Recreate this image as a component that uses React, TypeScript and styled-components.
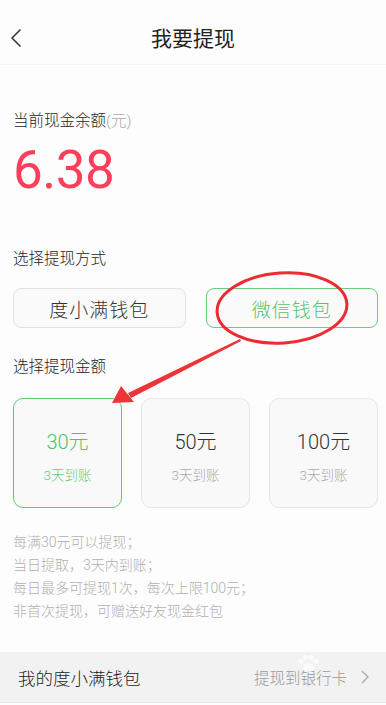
import React, { useState } from 'react';
import styled, { createGlobalStyle } from 'styled-components';

const GlobalStyle = createGlobalStyle`
  html, body {
    margin: 0;
    padding: 0;
    background: #fdfdfd;
  }
  body {
    font-family: Roboto, 'Noto Sans CJK SC', sans-serif;
    font-weight: 300;
    -webkit-font-smoothing: antialiased;
  }
`;

const methods = ['度小满钱包', '微信钱包'];

const amounts = [
  { value: '30元', note: '3天到账' },
  { value: '50元', note: '3天到账' },
  { value: '100元', note: '3天到账' },
];

const rules = [
  '每满30元可以提现；',
  '当日提取，3天内到账；',
  '每日最多可提现1次，每次上限100元；',
  '非首次提现，可赠送好友现金红包',
];

const App: React.FC = () => {
  const [method, setMethod] = useState(1);
  const [amount, setAmount] = useState(0);

  return (
    <Page>
      <GlobalStyle />
      <Header>
        <BackButton aria-label="back">
          <svg width="12" height="20" viewBox="0 0 12 20">
            <path d="M10.5 1.5 L2 10 L10.5 18.5" fill="none" stroke="#333" strokeWidth="1.5" />
          </svg>
        </BackButton>
        <Title>我要提现</Title>
      </Header>

      <Content>
        <Label>
          当前现金余额<Unit>(元)</Unit>
        </Label>
        <Balance>6.38</Balance>

        <SectionLabel $top={52}>选择提现方式</SectionLabel>
        <MethodRow>
          {methods.map((m, i) => (
            <MethodButton key={m} $active={method === i} onClick={() => setMethod(i)}>
              {m}
            </MethodButton>
          ))}
        </MethodRow>

        <SectionLabel $top={29}>选择提现金额</SectionLabel>
        <AmountGrid>
          {amounts.map((a, i) => (
            <AmountCard key={a.value} $active={amount === i} onClick={() => setAmount(i)}>
              <AmountValue>{a.value}</AmountValue>
              <AmountNote $active={amount === i}>{a.note}</AmountNote>
            </AmountCard>
          ))}
        </AmountGrid>

        <Rules>
          {rules.map((r) => (
            <Rule key={r}>{r}</Rule>
          ))}
        </Rules>
      </Content>

      <WalletRow>
        <WalletName>我的度小满钱包</WalletName>
        <WalletLink>
          提现到银行卡
          <svg width="8" height="14" viewBox="0 0 8 14">
            <path d="M1 1 L7 7 L1 13" fill="none" stroke="#aaa" strokeWidth="1.3" />
          </svg>
        </WalletLink>
        <Watermark aria-hidden="true">
          <Paw viewBox="0 0 30 26">
            <circle cx="6" cy="9" r="3.2" />
            <circle cx="12" cy="4" r="3.2" />
            <circle cx="19" cy="4" r="3.2" />
            <circle cx="25" cy="9" r="3.2" />
            <ellipse cx="15.5" cy="17" rx="7" ry="6" />
          </Paw>
        </Watermark>
      </WalletRow>

      <Annotation viewBox="0 0 386 705">
        <ellipse
          cx="282"
          cy="308"
          rx="65"
          ry="35"
          transform="rotate(-4 282 308)"
          fill="none"
          stroke="#ee2a33"
          strokeWidth="3"
        />
        <polygon points="240,339 128,393 131,398 241,341" fill="#ee3438" />
        <polygon points="112,403 121,386 134,402" fill="#ee3438" />
      </Annotation>
    </Page>
  );
};

export default App;

const Page = styled.div`
  position: relative;
  width: 386px;
  height: 705px;
  overflow: hidden;
  background: #fdfdfd;
`;

const Header = styled.header`
  position: relative;
  height: 65px;
  display: flex;
  align-items: center;
  justify-content: center;
  border-bottom: 1px solid #f3f3f3;
  box-sizing: border-box;
`;

const BackButton = styled.button`
  position: absolute;
  left: 10px;
  top: 28px;
  border: 0;
  background: none;
  padding: 0;
  display: flex;
`;

const Title = styled.h1`
  margin: 0;
  padding-top: 10px;
  font-size: 21px;
  font-weight: 400;
  color: #222;
`;

const Content = styled.main`
  padding: 46px 8px 0 13px;
`;

const Label = styled.div`
  font-size: 15.5px;
  line-height: 20px;
  color: #222;
`;

const Unit = styled.span`
  color: #aaa;
`;

const Balance = styled.div`
  margin-top: 12px;
  font-size: 53px;
  line-height: 54px;
  font-weight: 400;
  color: #fd3f5b;
  letter-spacing: -0.5px;
`;

const SectionLabel = styled.div<{ $top: number }>`
  margin-top: ${({ $top }) => $top}px;
  font-size: 15.5px;
  line-height: 20px;
  color: #222;
`;

const MethodRow = styled.div`
  margin-top: 19px;
  display: grid;
  grid-template-columns: 1fr 1fr;
  gap: 20px;
`;

const MethodButton = styled.button<{ $active: boolean }>`
  height: 40px;
  border-radius: 8px;
  border: 1px solid ${({ $active }) => ($active ? '#69cf7b' : '#e2e2e2')};
  background: #fafafa;
  color: ${({ $active }) => ($active ? '#55c469' : '#333')};
  font-family: inherit;
  font-weight: 300;
  font-size: 19px;
  letter-spacing: 1px;
  padding: 0;
`;

const AmountGrid = styled.div`
  margin-top: 21px;
  display: grid;
  grid-template-columns: repeat(3, 109px);
  gap: 19px;
`;

const AmountCard = styled.div<{ $active: boolean }>`
  height: 110px;
  box-sizing: border-box;
  border-radius: 10px;
  border: 1px solid ${({ $active }) => ($active ? '#5fcb70' : '#e6e6e6')};
  background: #f9f9f9;
  display: flex;
  flex-direction: column;
  align-items: center;
  padding-top: 30px;
  color: ${({ $active }) => ($active ? '#4ec462' : '#333')};
`;

const AmountValue = styled.div`
  font-size: 20px;
  line-height: 26px;
`;

const AmountNote = styled.div<{ $active: boolean }>`
  margin-top: 11px;
  font-size: 13.5px;
  line-height: 18px;
  color: ${({ $active }) => ($active ? '#62cc74' : '#aaa')};
`;

const Rules = styled.div`
  margin-top: 23px;
`;

const Rule = styled.div`
  font-size: 14px;
  line-height: 23px;
  color: #b0b0b0;
`;

const WalletRow = styled.div`
  position: absolute;
  left: 0;
  right: 0;
  top: 652px;
  height: 50px;
  background: #f2f2f2;
  border-bottom: 1px solid #e6e6e6;
  display: flex;
  align-items: center;
  justify-content: space-between;
  padding: 0 17px 0 18px;
`;

const WalletName = styled.div`
  font-size: 17.5px;
  color: #222;
`;

const WalletLink = styled.div`
  display: flex;
  align-items: center;
  gap: 14px;
  font-size: 15.5px;
  color: #999;
`;

const Watermark = styled.div`
  position: absolute;
  left: 296px;
  top: 2px;
  width: 26px;
  height: 22px;
  pointer-events: none;
  opacity: 0.7;
`;

const Paw = styled.svg`
  width: 24px;
  height: 21px;
  fill: #fff;
`;

const Annotation = styled.svg`
  position: absolute;
  left: 0;
  top: 0;
  width: 386px;
  height: 705px;
  pointer-events: none;
`;
